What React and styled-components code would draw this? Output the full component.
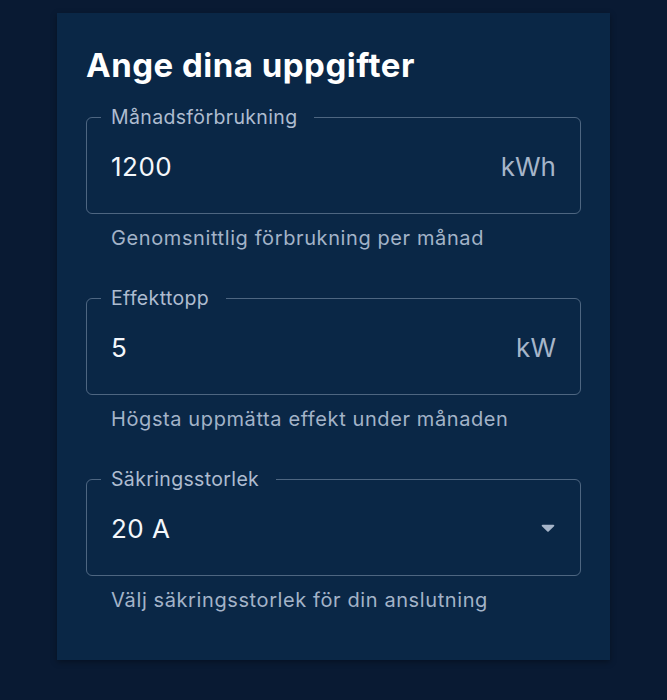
import styled, { createGlobalStyle } from 'styled-components';

const GlobalStyle = createGlobalStyle`
  html, body {
    margin: 0;
    padding: 0;
    background: #091a33;
    font-family: Inter, "Noto Sans", "Liberation Sans", sans-serif;
  }
`;

const Page = styled.div`
  min-height: 700px;
  padding: 13px 0 0 57px;
  box-sizing: border-box;
`;

const Card = styled.section`
  width: 553px;
  box-sizing: border-box;
  padding: 34px 29px 48px;
  background: #0a2746;
  box-shadow: 0 2px 6px rgba(0, 0, 0, 0.35);
  display: flex;
  flex-direction: column;
  gap: 36px;
`;

const Title = styled.h2`
  margin: 0 0 -14px;
  font-size: 33px;
  line-height: 36px;
  font-weight: 700;
  color: #ffffff;
  letter-spacing: 0.5px;
`;

const Field = styled.div`
  display: flex;
  flex-direction: column;
`;

const Outline = styled.fieldset`
  margin: 0;
  padding: 0 14px 10px;
  border: 1px solid rgba(190, 205, 225, 0.38);
  border-radius: 6px;
  min-width: 0;
`;

const Label = styled.legend`
  padding: 0 17px 0 10px;
  font-size: 19.5px;
  line-height: 24px;
  color: #aebcd0;
  letter-spacing: 0.35px;
`;

const Row = styled.div`
  height: 74px;
  padding: 0 10px;
  display: flex;
  align-items: center;
  justify-content: space-between;
`;

const Value = styled.span`
  font-size: 26px;
  color: #f4f7fb;
  letter-spacing: 0.5px;
`;

const Unit = styled.span`
  font-size: 26px;
  color: #a6b5c9;
`;

const Helper = styled.p`
  margin: 12px 0 0;
  padding-left: 25px;
  font-size: 20px;
  line-height: 24px;
  color: #a3b3c8;
  letter-spacing: 0.6px;
`;

function Caret() {
  return (
    <svg width="14" height="8" viewBox="0 0 14 8" style={{ marginRight: 1 }}>
      <path
        d="M1.6 0.8h10.8a0.9 0.9 0 0 1 0.64 1.54l-5.4 5.1a0.9 0.9 0 0 1-1.28 0l-5.4-5.1A0.9 0.9 0 0 1 1.6 0.8z"
        fill="#a6b5c9"
      />
    </svg>
  );
}

const fields = [
  { label: 'Månadsförbrukning', value: '1200', unit: 'kWh', help: 'Genomsnittlig förbrukning per månad' },
  { label: 'Effekttopp', value: '5', unit: 'kW', help: 'Högsta uppmätta effekt under månaden' },
  { label: 'Säkringsstorlek', value: '20 A', select: true, help: 'Välj säkringsstorlek för din anslutning' },
];

export default function App() {
  return (
    <>
      <GlobalStyle />
      <Page>
        <Card>
          <Title>Ange dina uppgifter</Title>
          {fields.map((f) => (
            <Field key={f.label}>
              <Outline>
                <Label>{f.label}</Label>
                <Row>
                  <Value>{f.value}</Value>
                  {f.select ? <Caret /> : <Unit>{f.unit}</Unit>}
                </Row>
              </Outline>
              <Helper>{f.help}</Helper>
            </Field>
          ))}
        </Card>
      </Page>
    </>
  );
}
